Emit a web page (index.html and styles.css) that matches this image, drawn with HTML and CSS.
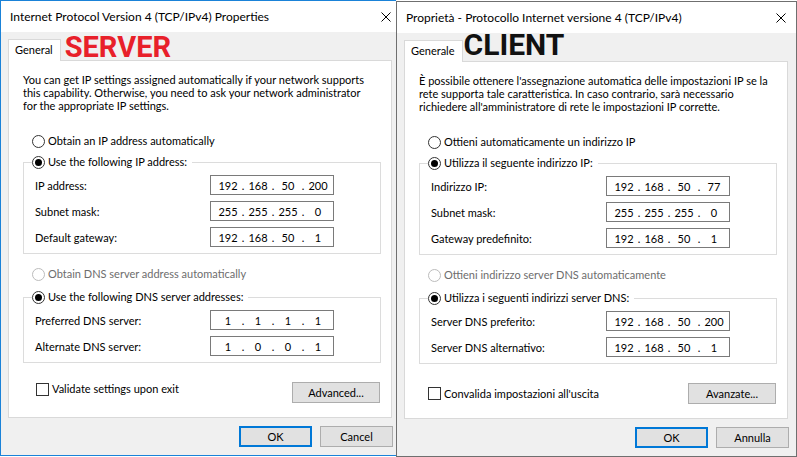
FILE: index.html
```html
<!DOCTYPE html>
<html>
<head>
<meta charset="utf-8">
<link rel="stylesheet" href="styles.css">
</head>
<body>
<div class="screen">
  <div class="clip">
    <div class="win active">
      <div class="titlebar">
        <span class="title">Internet Protocol Version 4 (TCP/IPv4) Properties</span>
        <span class="close"><svg width="10" height="10" viewBox="0 0 10 10"><path d="M0.5 0.5L9.5 9.5M9.5 0.5L0.5 9.5" stroke="#000" stroke-width="1" fill="none"/></svg></span>
      </div>
      <div class="body">
        <div class="tabs">
          <div class="tab">General</div>
          <div class="tag server">SERVER</div>
        </div>
        <div class="panel">
          <p class="intro">You can get IP settings assigned automatically if your network supports<br>this capability. Otherwise, you need to ask your network administrator<br>for the appropriate IP settings.</p>
          <div class="opt first"><span class="radio"></span>Obtain an IP address automatically</div>
          <fieldset class="group">
            <legend class="opt"><span class="radio on"></span>Use the following IP address:</legend>
            <div class="row"><span class="lbl">IP address:</span><div class="ip"><span>192</span><i>.</i><span>168</span><i>.</i><span>50</span><i>.</i><span>200</span></div></div>
            <div class="row"><span class="lbl">Subnet mask:</span><div class="ip"><span>255</span><i>.</i><span>255</span><i>.</i><span>255</span><i>.</i><span>0</span></div></div>
            <div class="row"><span class="lbl">Default gateway:</span><div class="ip"><span>192</span><i>.</i><span>168</span><i>.</i><span>50</span><i>.</i><span>1</span></div></div>
          </fieldset>
          <div class="opt disabled"><span class="radio"></span>Obtain DNS server address automatically</div>
          <fieldset class="group dns">
            <legend class="opt"><span class="radio on"></span>Use the following DNS server addresses:</legend>
            <div class="row"><span class="lbl">Preferred DNS server:</span><div class="ip"><span>1</span><i>.</i><span>1</span><i>.</i><span>1</span><i>.</i><span>1</span></div></div>
            <div class="row"><span class="lbl">Alternate DNS server:</span><div class="ip"><span>1</span><i>.</i><span>0</span><i>.</i><span>0</span><i>.</i><span>1</span></div></div>
          </fieldset>
          <div class="foot top">
            <div class="opt chk"><span class="box"></span>Validate settings upon exit</div>
            <button class="btn adv">Advanced...</button>
          </div>
        </div>
        <div class="actions">
          <button class="btn ok">OK</button>
          <button class="btn">Cancel</button>
        </div>
      </div>
    </div>
  </div>
  <div class="win inactive">
    <div class="titlebar">
      <span class="title">Proprietà - Protocollo Internet versione 4 (TCP/IPv4)</span>
      <span class="close"><svg width="10" height="10" viewBox="0 0 10 10"><path d="M0.5 0.5L9.5 9.5M9.5 0.5L0.5 9.5" stroke="#000" stroke-width="1" fill="none"/></svg></span>
    </div>
    <div class="body">
      <div class="tabs">
        <div class="tab">Generale</div>
        <div class="tag client">CLIENT</div>
      </div>
      <div class="panel">
        <p class="intro">È possibile ottenere l'assegnazione automatica delle impostazioni IP se la<br>rete supporta tale caratteristica. In caso contrario, sarà necessario<br>richiedere all'amministratore di rete le impostazioni IP corrette.</p>
        <div class="opt first"><span class="radio"></span>Ottieni automaticamente un indirizzo IP</div>
        <fieldset class="group">
          <legend class="opt"><span class="radio on"></span>Utilizza il seguente indirizzo IP:</legend>
          <div class="row"><span class="lbl">Indirizzo IP:</span><div class="ip"><span>192</span><i>.</i><span>168</span><i>.</i><span>50</span><i>.</i><span>77</span></div></div>
          <div class="row"><span class="lbl">Subnet mask:</span><div class="ip"><span>255</span><i>.</i><span>255</span><i>.</i><span>255</span><i>.</i><span>0</span></div></div>
          <div class="row"><span class="lbl">Gateway predefinito:</span><div class="ip"><span>192</span><i>.</i><span>168</span><i>.</i><span>50</span><i>.</i><span>1</span></div></div>
        </fieldset>
        <div class="opt disabled"><span class="radio"></span>Ottieni indirizzo server DNS automaticamente</div>
        <fieldset class="group dns">
          <legend class="opt"><span class="radio on"></span>Utilizza i seguenti indirizzi server DNS:</legend>
          <div class="row"><span class="lbl">Server DNS preferito:</span><div class="ip"><span>192</span><i>.</i><span>168</span><i>.</i><span>50</span><i>.</i><span>200</span></div></div>
          <div class="row"><span class="lbl">Server DNS alternativo:</span><div class="ip"><span>192</span><i>.</i><span>168</span><i>.</i><span>50</span><i>.</i><span>1</span></div></div>
        </fieldset>
        <div class="foot">
          <div class="opt chk"><span class="box"></span>Convalida impostazioni all'uscita</div>
          <button class="btn adv">Avanzate...</button>
        </div>
      </div>
      <div class="actions">
        <button class="btn ok">OK</button>
        <button class="btn">Annulla</button>
      </div>
    </div>
  </div>
</div>
</body>
</html>
```
FILE: styles.css
```css
html, body {
  margin: 0;
  padding: 0;
  background: #ffffff;
}
body {
  font-family: Lato, "Liberation Sans", sans-serif;
  font-size: 11px;
  color: #000;
}
.screen {
  display: flex;
  width: 797px;
  height: 457px;
  overflow: hidden;
}
.clip {
  width: 396px;
  flex: none;
  overflow: hidden;
}
.win {
  box-sizing: border-box;
  width: 402px;
  height: 456px;
  border: 1px solid #1a82d8;
  background: #f0f0f0;
  display: flex;
  flex-direction: column;
  flex: none;
}
.win.inactive {
  width: 401px;
  margin-top: 1px;
  border-color: #6f6f6f;
}
.titlebar {
  height: 31px;
  background: #fff;
  display: flex;
  align-items: center;
  justify-content: space-between;
  flex: none;
}
.title {
  padding-left: 9px;
  font-size: 12px;
  line-height: 16px;
  white-space: nowrap;
}
.close {
  width: 30px;
  height: 31px;
  display: flex;
  align-items: center;
  justify-content: center;
}
.body {
  padding: 7px 7px 0 7px;
}
.tabs {
  display: flex;
  align-items: flex-end;
  height: 22px;
  margin-bottom: -1px;
  position: relative;
  z-index: 1;
}
.tab {
  box-sizing: border-box;
  height: 22px;
  padding: 0 7px 0 6px;
  border: 1px solid #d9d9d9;
  border-bottom: none;
  background: #fff;
  line-height: 19px;
  white-space: nowrap;
}
.tag {
  font-family: Roboto, "Liberation Sans", sans-serif;
  font-weight: 700;
  line-height: 24px;
  white-space: nowrap;
}
.server {
  color: #e8202a;
  font-size: 29px;
  margin-left: 4px;
  margin-bottom: 2px;
}
.client {
  color: #111;
  font-size: 30px;
  margin-left: 1px;
  margin-bottom: 5px;
}
.panel {
  box-sizing: border-box;
  width: 384px;
  background: #fff;
  border: 1px solid #d9d9d9;
  padding: 12px 10px 14px 14px;
}
.intro {
  margin: 0;
  line-height: 13px;
  white-space: nowrap;
}
.opt {
  display: flex;
  align-items: center;
  height: 16px;
  line-height: 16px;
  white-space: nowrap;
}
.opt.first {
  margin-top: 21px;
  padding-left: 9px;
}
.opt.disabled {
  margin-top: 12px;
  padding-left: 9px;
  color: #6d6d6d;
}
.opt.disabled .radio {
  border-color: #bcbcbc;
}
.radio {
  box-sizing: border-box;
  width: 13px;
  height: 13px;
  border: 1px solid #333;
  border-radius: 50%;
  margin-right: 3px;
  display: flex;
  align-items: center;
  justify-content: center;
  background: #fff;
}
.radio.on::after {
  content: "";
  width: 7px;
  height: 7px;
  border-radius: 50%;
  background: #000;
}
.group {
  margin: 5px 0 0 0;
  padding: 5px 0 6px 11px;
  border: 1px solid #dcdcdc;
  min-width: 0;
}
.group.dns {
  margin-top: 7px;
}
.group legend {
  margin-left: -3px;
  padding: 0 5px 0 0;
  background: #fff;
}
.row {
  display: flex;
  align-items: center;
  height: 20px;
}
.row + .row {
  margin-top: 6px;
}
.lbl {
  width: 175px;
  flex: none;
  white-space: nowrap;
}
.ip {
  box-sizing: border-box;
  width: 124px;
  height: 20px;
  border: 1px solid #7a7a7a;
  display: flex;
  align-items: center;
  padding-left: 5px;
}
.ip span {
  width: 24px;
  text-align: center;
}
.ip i {
  font-style: normal;
  width: 6px;
  text-align: center;
}
.foot {
  display: flex;
  justify-content: space-between;
  align-items: center;
  margin-top: 19px;
}
.foot.top {
  align-items: flex-start;
}
.chk {
  padding-left: 9px;
}
.foot.top .chk {
  padding-left: 13px;
  margin-top: -1px;
}
.box {
  box-sizing: border-box;
  width: 13px;
  height: 13px;
  border: 1px solid #333;
  margin-right: 3px;
  background: #fff;
}
.btn {
  box-sizing: border-box;
  height: 21px;
  background: #e1e1e1;
  border: 1px solid #adadad;
  font-family: inherit;
  font-size: 11px;
  color: #000;
  padding: 0;
  line-height: 18px;
}
.adv {
  width: 88px;
  margin-right: 1px;
}
.actions {
  display: flex;
  justify-content: flex-end;
  gap: 8px;
  margin-top: 8px;
  width: 385px;
}
.actions .btn {
  width: 73px;
}
.btn.ok {
  border: 2px solid #0078d7;
}
```
